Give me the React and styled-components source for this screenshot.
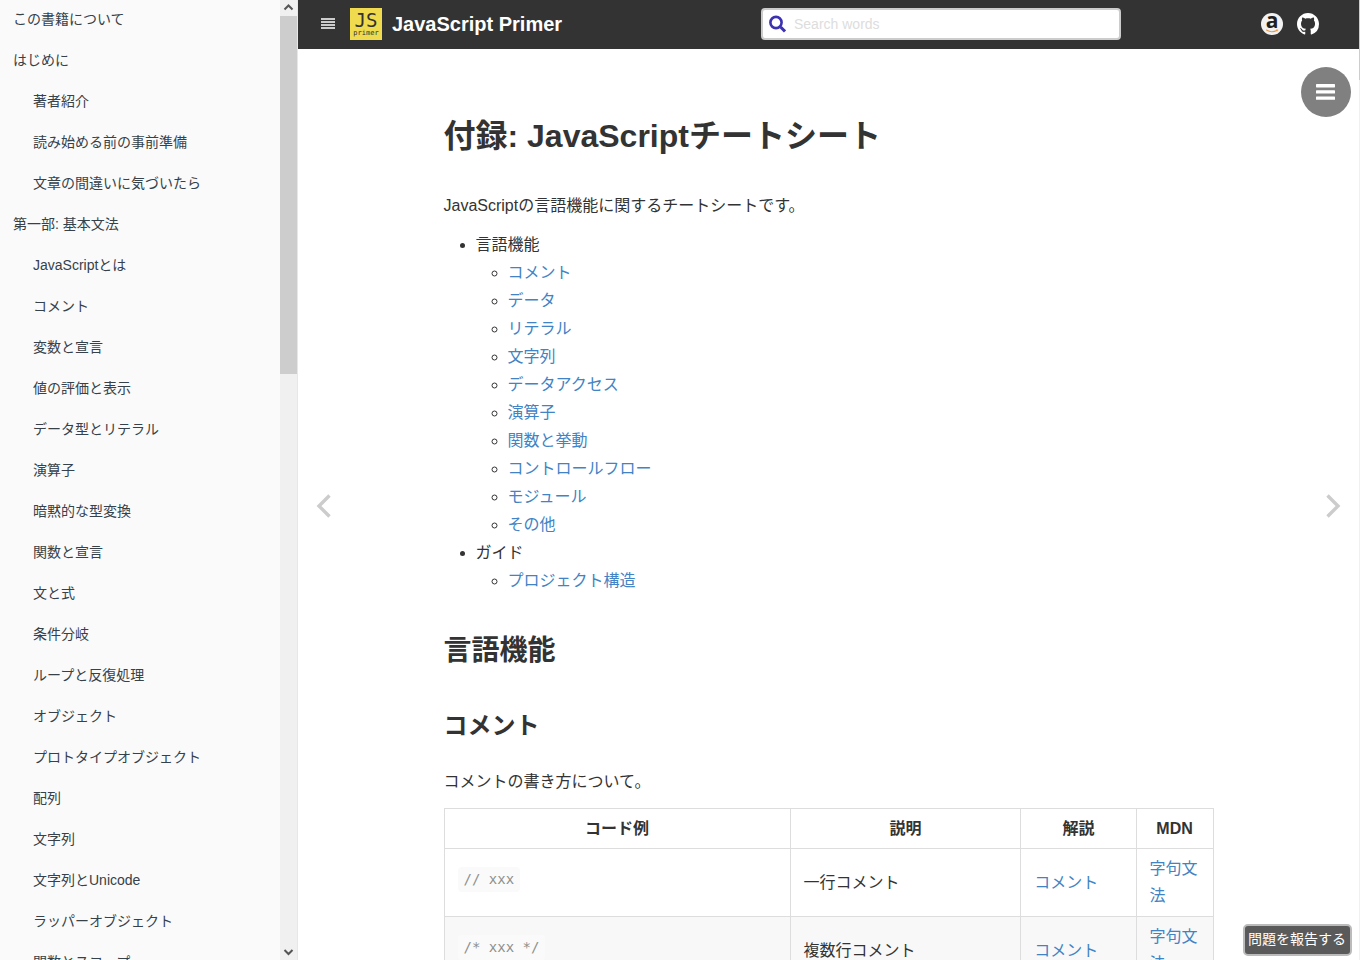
import React, { useState } from "react";
import styled, { createGlobalStyle } from "styled-components";

const GlobalStyle = createGlobalStyle`
  * {
    box-sizing: border-box;
  }
  body {
    margin: 0;
    color: #333;
    background: #fff;
    font-family: "Liberation Sans", "Noto Sans CJK JP", sans-serif;
    font-size: 16px;
    line-height: 28px;
  }
`;

const Page = styled.div`
  display: flex;
  height: 100vh;
  overflow: hidden;
`;

// Sidebar
const Sidebar = styled.aside`
  display: flex;
  flex: 0 0 298px;
  background: #fafafa;
  border-right: 1px solid #e7e7e7;
`;

const Summary = styled.ul`
  flex: 1;
  margin: 0;
  padding: 0;
  list-style: none;
  overflow: hidden;
`;

const ChapterLink = styled.a`
  display: block;
  padding: 11px 13px 13px ${(props) => (props.$nested ? "33px" : "13px")};
  color: #364149;
  font-size: 14px;
  line-height: 17px;
  white-space: nowrap;
  text-decoration: none;
`;

const ScrollTrack = styled.div`
  display: flex;
  flex-direction: column;
  flex: 0 0 17px;
  background: #f0f0f0;
`;

const ScrollThumb = styled.div`
  flex: 0 0 calc((100% - 32px) * 0.386);
  margin-bottom: auto;
  background: #cdcdcd;
`;

const ScrollArrow = styled.svg`
  display: block;
  width: 17px;
  height: 16px;
`;

const WindowScroll = styled.div`
  flex: 0 0 1px;
  background: linear-gradient(#cdcdcd 80px, #f0f0f0 80px);
`;

// Right side of the page
const Main = styled.div`
  position: relative;
  display: flex;
  flex-direction: column;
  flex: 1;
  min-width: 0;
`;

const Header = styled.header`
  display: flex;
  align-items: center;
  flex: 0 0 49px;
  padding: 0 40px 1px 22px;
  background: #333;
`;

const MenuButton = styled.button`
  display: flex;
  margin-right: 14px;
  padding: 0;
  border: 0;
  background: none;
  cursor: pointer;
`;

const Brand = styled.a`
  display: flex;
  align-items: center;
  gap: 10px;
  color: #fff;
  font-size: 20px;
  font-weight: bold;
  white-space: nowrap;
  text-decoration: none;
`;

const SearchForm = styled.form`
  display: flex;
  align-items: center;
  width: 360px;
  height: 32px;
  margin: 0 140px 0 auto;
  padding: 0 6px;
  gap: 8px;
  background: #fff;
  border: 2px solid #ccc;
  border-radius: 4px;
`;

const SearchInput = styled.input`
  flex: 1;
  min-width: 0;
  padding: 0;
  border: 0;
  outline: 0;
  color: #333;
  font-family: inherit;
  font-size: 14px;
  &::placeholder {
    color: #ddd;
    opacity: 1;
  }
`;

const IconLinks = styled.nav`
  display: flex;
  gap: 14px;
`;

const IconLink = styled.a`
  display: flex;
`;

const Content = styled.main`
  flex: 1;
  padding: 65px 64px 0;
  overflow: hidden;
`;

const Article = styled.article`
  max-width: 770px;
  margin: 0 auto;
`;

const Title = styled.h1`
  margin: 0 0 34px;
  font-size: 32px;
  line-height: 44px;
`;

const SectionTitle = styled.h2`
  margin: 0 0 37px;
  font-size: 28px;
  line-height: 40px;
`;

const SubTitle = styled.h3`
  margin: 0 0 24px;
  font-size: 24px;
  line-height: 36px;
`;

const Paragraph = styled.p`
  margin: 0 0 11px;
`;

const Toc = styled.ul`
  margin: 0 0 36px;
  padding-left: 32px;
`;

const SubToc = styled.ul`
  margin: 0;
  padding-left: 32px;
`;

const TextLink = styled.a`
  color: #4183c4;
  text-decoration: none;
`;

const Table = styled.table`
  width: 100%;
  margin-top: 12px;
  table-layout: fixed;
  border-collapse: collapse;
  line-height: 27px;
`;

const HeadCell = styled.th`
  width: ${(props) => props.$width};
  padding: 6px 13px;
  border: 1px solid #ddd;
`;

const Row = styled.tr`
  background: #fff;
  &:nth-child(even) {
    background: #f8f8f8;
  }
`;

const Cell = styled.td`
  padding: 6px 12px 7px 13px;
  border: 1px solid #ddd;
`;

const Code = styled.code`
  display: block;
  width: fit-content;
  margin-bottom: 6px;
  padding: 0 6px;
  color: #8e908c;
  background: #fafafa;
  border-radius: 4px;
  font-family: "DejaVu Sans Mono", monospace;
  font-size: 14px;
  line-height: 25px;
`;

// Controls that float above the text
const TocButton = styled.button`
  position: absolute;
  top: 67px;
  right: 8px;
  display: flex;
  align-items: center;
  justify-content: center;
  width: 50px;
  height: 50px;
  padding: 0;
  border: 0;
  border-radius: 50%;
  background: #808080;
  cursor: pointer;
`;

const PageArrow = styled.a`
  position: absolute;
  top: calc(50% + 14px);
  ${(props) => (props.$side === "left" ? "left: 18px;" : "right: 18px;")}
  display: flex;
  color: #ccc;
`;

const ReportButton = styled.button`
  position: absolute;
  right: 7px;
  bottom: 4px;
  height: 32px;
  padding: 0 4px 2px 3px;
  color: #fff;
  background: #5a5a5a;
  border: 2px solid #bbb;
  border-radius: 5px;
  font-family: inherit;
  font-size: 14px;
  line-height: 24px;
  white-space: nowrap;
  cursor: pointer;
`;

const chapters = [
  { title: "この書籍について" },
  { title: "はじめに" },
  { title: "著者紹介", nested: true },
  { title: "読み始める前の事前準備", nested: true },
  { title: "文章の間違いに気づいたら", nested: true },
  { title: "第一部: 基本文法" },
  { title: "JavaScriptとは", nested: true },
  { title: "コメント", nested: true },
  { title: "変数と宣言", nested: true },
  { title: "値の評価と表示", nested: true },
  { title: "データ型とリテラル", nested: true },
  { title: "演算子", nested: true },
  { title: "暗黙的な型変換", nested: true },
  { title: "関数と宣言", nested: true },
  { title: "文と式", nested: true },
  { title: "条件分岐", nested: true },
  { title: "ループと反復処理", nested: true },
  { title: "オブジェクト", nested: true },
  { title: "プロトタイプオブジェクト", nested: true },
  { title: "配列", nested: true },
  { title: "文字列", nested: true },
  { title: "文字列とUnicode", nested: true },
  { title: "ラッパーオブジェクト", nested: true },
  { title: "関数とスコープ", nested: true },
];

const toc = [
  {
    title: "言語機能",
    items: [
      "コメント",
      "データ",
      "リテラル",
      "文字列",
      "データアクセス",
      "演算子",
      "関数と挙動",
      "コントロールフロー",
      "モジュール",
      "その他",
    ],
  },
  { title: "ガイド", items: ["プロジェクト構造"] },
];

const comments = [
  { code: "// xxx", text: "一行コメント" },
  { code: "/* xxx */", text: "複数行コメント" },
];

const Logo = () => (
  <svg width="32" height="32" viewBox="0 0 32 32" fill="#323330" aria-hidden="true">
    <rect width="32" height="32" fill="#f0db4f" />
    <text x="16" y="19" textAnchor="middle" fontFamily="DejaVu Sans Mono, monospace" fontSize="19" fontWeight="400">
      JS
    </text>
    <text x="16" y="27" textAnchor="middle" fontFamily="DejaVu Sans Mono, monospace" fontSize="7" fontWeight="400">
      primer
    </text>
  </svg>
);

const AmazonIcon = () => (
  <svg width="22" height="22" viewBox="0 0 22 22" aria-hidden="true">
    <circle cx="11" cy="11" r="11" fill="#f2f2f2" />
    <text x="11" y="15" textAnchor="middle" fontFamily="Open Sans, sans-serif" fontSize="21" fontWeight="700" fill="#221f1f">
      a
    </text>
    <path d="M5.5 17C8.7 19 12.8 19 15.8 17.6" fill="none" stroke="#f0953b" strokeWidth="1.1" strokeLinecap="round" />
    <path d="M15 16.9L16.9 16.8L16.4 18.3" fill="none" stroke="#f0953b" strokeWidth="0.7" />
  </svg>
);

const GithubIcon = () => (
  <svg width="22" height="22" viewBox="0 0 16 16" fill="#fff" aria-hidden="true">
    <path d="M8 0C3.58 0 0 3.58 0 8c0 3.54 2.29 6.53 5.47 7.59.4.07.55-.17.55-.38 0-.19-.01-.82-.01-1.49-2.01.37-2.53-.49-2.69-.94-.09-.23-.48-.94-.82-1.13-.28-.15-.68-.52-.01-.53.63-.01 1.08.58 1.23.82.72 1.21 1.87.87 2.33.66.07-.52.28-.87.51-1.07-1.78-.2-3.64-.89-3.64-3.95 0-.87.31-1.59.82-2.15-.08-.2-.36-1.02.08-2.12 0 0 .67-.21 2.2.82.64-.18 1.32-.27 2-.27.68 0 1.36.09 2 .27 1.53-1.04 2.2-.82 2.2-.82.44 1.1.16 1.92.08 2.12.51.56.82 1.27.82 2.15 0 3.07-1.87 3.75-3.65 3.95.29.25.54.73.54 1.48 0 1.07-.01 1.93-.01 2.2 0 .21.15.46.55.38A8.013 8.013 0 0016 8c0-4.42-3.58-8-8-8z" />
  </svg>
);

const Chevron = ({ points }) => (
  <svg width="15" height="24" viewBox="0 0 15 24" aria-hidden="true">
    <polyline points={points} fill="none" stroke="currentColor" strokeWidth="3.4" />
  </svg>
);

const App = () => {
  const [showSummary, setShowSummary] = useState(true);
  const [words, setWords] = useState("");

  return (
    <Page>
      <GlobalStyle />
      {showSummary && (
        <Sidebar>
          <Summary>
            {chapters.map((chapter) => (
              <li key={chapter.title}>
                <ChapterLink href="#" $nested={chapter.nested}>
                  {chapter.title}
                </ChapterLink>
              </li>
            ))}
          </Summary>
          <ScrollTrack aria-hidden="true">
            <ScrollArrow viewBox="0 0 17 16">
              <path d="M4.5 9.5L8.5 5.5L12.5 9.5" fill="none" stroke="#555" strokeWidth="2" />
            </ScrollArrow>
            <ScrollThumb />
            <ScrollArrow viewBox="0 0 17 16">
              <path d="M4.5 6L8.5 10L12.5 6" fill="none" stroke="#555" strokeWidth="2" />
            </ScrollArrow>
          </ScrollTrack>
        </Sidebar>
      )}
      <Main>
        <Header>
          <MenuButton aria-label="Toggle summary" onClick={() => setShowSummary(!showSummary)}>
            <svg width="16" height="12" viewBox="0 0 16 12" fill="#ccc" aria-hidden="true">
              <path d="M1 0h14v2H1zM1 3h14v2H1zM1 6h14v2H1zM1 9h14v2H1z" />
            </svg>
          </MenuButton>
          <Brand href="#">
            <Logo />
            JavaScript Primer
          </Brand>
          <SearchForm role="search" onSubmit={(e) => e.preventDefault()}>
            <svg width="17" height="18" viewBox="0 0 17 18" fill="none" stroke="#3b31b1" aria-hidden="true">
              <circle cx="7" cy="7.5" r="5.6" strokeWidth="2.6" />
              <path d="M11.6 12L16 16.4" strokeWidth="3" />
            </svg>
            <SearchInput
              type="text"
              aria-label="Search words"
              placeholder="Search words"
              value={words}
              onChange={(e) => setWords(e.target.value)}
            />
          </SearchForm>
          <IconLinks>
            <IconLink href="#" aria-label="Amazon">
              <AmazonIcon />
            </IconLink>
            <IconLink href="#" aria-label="GitHub">
              <GithubIcon />
            </IconLink>
          </IconLinks>
        </Header>

        <Content>
          <Article>
            <Title>付録: JavaScriptチートシート</Title>
            <Paragraph>JavaScriptの言語機能に関するチートシートです。</Paragraph>
            <Toc>
              {toc.map((section) => (
                <li key={section.title}>
                  {section.title}
                  <SubToc>
                    {section.items.map((item) => (
                      <li key={item}>
                        <TextLink href="#">{item}</TextLink>
                      </li>
                    ))}
                  </SubToc>
                </li>
              ))}
            </Toc>
            <SectionTitle>言語機能</SectionTitle>
            <SubTitle>コメント</SubTitle>
            <Paragraph>コメントの書き方について。</Paragraph>
            <Table>
              <thead>
                <tr>
                  <HeadCell $width="45%">コード例</HeadCell>
                  <HeadCell $width="30%">説明</HeadCell>
                  <HeadCell $width="15%">解説</HeadCell>
                  <HeadCell $width="10%">MDN</HeadCell>
                </tr>
              </thead>
              <tbody>
                {comments.map((row) => (
                  <Row key={row.code}>
                    <Cell>
                      <Code>{row.code}</Code>
                    </Cell>
                    <Cell>{row.text}</Cell>
                    <Cell>
                      <TextLink href="#">コメント</TextLink>
                    </Cell>
                    <Cell>
                      <TextLink href="#">字句文法</TextLink>
                    </Cell>
                  </Row>
                ))}
              </tbody>
            </Table>
          </Article>
        </Content>

        <TocButton aria-label="Table of contents">
          <svg width="20" height="18" viewBox="0 0 20 18" fill="#fff" aria-hidden="true">
            <rect x="0" y="1" width="19" height="3.4" rx="0.6" />
            <rect x="0" y="7.2" width="19" height="3.4" rx="0.6" />
            <rect x="0" y="13.4" width="19" height="3.4" rx="0.6" />
          </svg>
        </TocButton>
        <PageArrow href="#" $side="left" aria-label="Previous page">
          <Chevron points="13.5,1.5 3,12 13.5,22.5" />
        </PageArrow>
        <PageArrow href="#" $side="right" aria-label="Next page">
          <Chevron points="1.5,1.5 12,12 1.5,22.5" />
        </PageArrow>
        <ReportButton>問題を報告する</ReportButton>
      </Main>
      <WindowScroll aria-hidden="true" />
    </Page>
  );
};

export default App;
